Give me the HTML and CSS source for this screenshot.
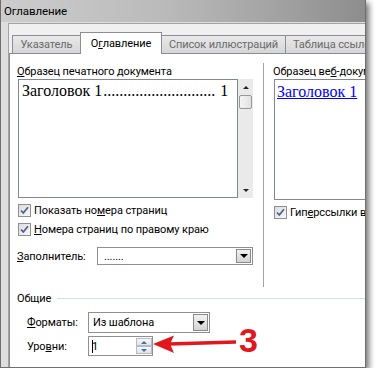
FILE: index.html
```html
<!DOCTYPE html>
<html lang="ru">

<head>
    <meta charset="UTF-8" />
    <meta name="viewport" content="width=device-width, initial-scale=1.0" />
    <title>Оглавление</title>
    <link rel="stylesheet" href="styles.css">
</head>

<body>

    <section class="window">
        <div class="titlebar">Оглавление</div>

        <div class="frame">
            <div class="client">

                <!-- вкладки -->
                <div class="tabs">
                    <div class="tab tab-index">Указатель</div>
                    <div class="tab act">О<u>г</u>лавление</div>
                    <div class="tab tab-figures">Список иллюстраций</div>
                    <div class="tab tab-cites">Таблица ссылок</div>
                </div>

                <div class="panel">
                    <div class="previews">

                        <div class="col-left">
                            <div class="label"><u>О</u>бразец печатного документа</div>
                            <div class="preview-wrap">
                                <div class="preview print">
                                    <div class="toc-line">
                                        <span>Заголовок 1</span>
                                        <span class="leader">............................</span>
                                        <span class="page-num">1</span>
                                    </div>
                                </div>
                                <div class="scrollbar">
                                    <span class="sb-arrow up"></span>
                                    <span class="sb-thumb"></span>
                                    <span class="sb-space"></span>
                                    <span class="sb-arrow down"></span>
                                </div>
                            </div>

                            <div class="check first">
                                <span class="box"><svg width="13" height="13" viewBox="0 0 13 13"><path d="M3 6.5 5.3 9 10 3.3" /></svg></span>
                                <span>Показать но<u>м</u>ера страниц</span>
                            </div>
                            <div class="check">
                                <span class="box"><svg width="13" height="13" viewBox="0 0 13 13"><path d="M3 6.5 5.3 9 10 3.3" /></svg></span>
                                <span><u>Н</u>омера страниц по правому краю</span>
                            </div>

                            <div class="field fill">
                                <span class="field-label"><u>З</u>аполнитель:</span>
                                <div class="combo combo-fill">
                                    <span class="combo-text">.......</span>
                                    <span class="combo-btn"></span>
                                </div>
                            </div>
                        </div>

                        <div class="sep"></div>

                        <div class="col-right">
                            <div class="label">Образец ве<u>б</u>-документа</div>
                            <div class="preview web">
                                <a class="web-link">Заголовок 1</a>
                            </div>
                            <div class="check web-check">
                                <span class="box"><svg width="13" height="13" viewBox="0 0 13 13"><path d="M3 6.5 5.3 9 10 3.3" /></svg></span>
                                <span>Гип<u>е</u>рссылки вместо номеров страниц</span>
                            </div>
                        </div>
                    </div>

                    <!-- Общие -->
                    <div class="group">
                        <div class="group-title">
                            <span>Общие</span>
                            <span class="group-line"></span>
                        </div>
                        <div class="field formats">
                            <span class="field-label short"><u>Ф</u>орматы:</span>
                            <div class="combo combo-formats">
                                <span class="combo-text">Из шаблона</span>
                                <span class="combo-btn"></span>
                            </div>
                        </div>
                        <div class="field levels">
                            <span class="field-label short">Уро<u>в</u>ни:</span>
                            <div class="spin">
                                <span class="spin-text"><i class="caret"></i>1</span>
                                <span class="spin-btns">
                                    <span class="spin-btn up"></span>
                                    <span class="spin-btn down"></span>
                                </span>
                            </div>
                        </div>
                    </div>
                </div>

            </div>
        </div>
    </section>

    <!-- пометка поверх скриншота -->
    <svg class="arrow" width="92" height="26" viewBox="0 0 92 26">
        <path d="M19 12 L86 10" stroke="#e3151d" stroke-width="3.5" fill="none" />
        <path d="M3 12 L24 3.5 L20 12 L24 21 Z" fill="#e3151d" />
    </svg>
    <div class="callout">3</div>

</body>

</html>
```

FILE: styles.css
```css
body {
    margin: 0;
    padding: 0;
    background-color: #fff;
    font-family: Roboto, "Liberation Sans", sans-serif;
    font-size: 11px;
    letter-spacing: -0.1px;
    color: #000;
}

u {
    text-decoration: underline;
    text-underline-offset: 1px;
}

.window {
    position: relative;
    display: flex;
    flex-direction: column;
    width: 366px;
    height: 368px;
    box-sizing: border-box;
    border-left: 1px solid #6f6f6f;
    border-right: 1px solid #6f6f6f;
    border-bottom: 1px solid #6f6f6f;
    overflow: hidden;
    box-shadow: 3px 3px 6px rgba(0, 0, 0, 0.55);
}

.titlebar {
    height: 22px;
    flex: none;
    padding-left: 3px;
    line-height: 22px;
    font-size: 11.5px;
    background: linear-gradient(to right, #cdcdcd, #bababa 45%, #a3a3a3 75%, #8d8d8d);
}

.frame {
    flex: 1;
    display: flex;
    padding: 1px 0 0 7px;
    background-color: #dedede;
}

.client {
    flex: 1;
    display: flex;
    flex-direction: column;
    border-top: 1px solid #a3a3a3;
    border-left: 1px solid #a3a3a3;
    background-color: #f0f0f0;
}

/* вкладки */
.tabs {
    display: flex;
    align-items: flex-end;
    height: 29px;
    padding-left: 3px;
    flex: none;
}

.tab {
    display: flex;
    align-items: center;
    justify-content: center;
    height: 18px;
    box-sizing: border-box;
    border: 1px solid #8c8e94;
    border-bottom: none;
    background: linear-gradient(#e9e9e9, #d6d6d6);
    color: #6a6a6a;
    white-space: nowrap;
    flex: none;
}

.tab-index {
    width: 68px;
    border-right: none;
}

.tab-figures {
    width: 124px;
    border-left: none;
}

.tab-cites {
    width: 100px;
    border-left: none;
    justify-content: flex-start;
    padding-left: 7px;
}

.act {
    position: relative;
    z-index: 1;
    width: 82px;
    height: 22px;
    margin-bottom: -1px;
    padding-bottom: 1px;
    background: #fff;
    color: #000;
}

.panel {
    flex: 1;
    border-top: 1px solid #898c95;
    border-left: 1px solid #898c95;
    background-color: #fff;
    padding: 10px 0 0 7px;
    overflow: hidden;
}

.previews {
    display: flex;
    height: 223px;
}

.col-left {
    width: 236px;
    flex: none;
}

.label {
    height: 15px;
    line-height: 15px;
    white-space: nowrap;
}

.preview-wrap {
    display: flex;
    height: 119px;
    margin-left: 1px;
}

.preview {
    box-sizing: border-box;
    border: 1px solid #828790;
    background-color: #fff;
    font-family: "Liberation Serif", serif;
    font-size: 16px;
    line-height: 18px;
    letter-spacing: 0;
}

.print {
    width: 220px;
    padding: 2px 0 0 3px;
}

.toc-line {
    display: flex;
    white-space: nowrap;
}

.leader {
    margin-left: 1px;
}

.page-num {
    margin-left: 5px;
}

.scrollbar {
    display: flex;
    flex-direction: column;
    align-items: center;
    width: 15px;
    background-color: #eaeaea;
}

.sb-arrow {
    width: 0;
    height: 0;
    border-left: 3px solid transparent;
    border-right: 3px solid transparent;
}

.sb-arrow.up {
    margin-top: 7px;
    border-bottom: 3px solid #222;
}

.sb-arrow.down {
    margin-bottom: 6px;
    border-top: 3px solid #222;
}

.sb-thumb {
    width: 13px;
    height: 14px;
    margin-top: 6px;
    box-sizing: border-box;
    border: 1px solid #979797;
    border-radius: 2px;
    background: linear-gradient(to right, #f4f4f4, #e2e2e2);
}

.sb-space {
    flex: 1;
}

/* флажки */
.check {
    display: flex;
    align-items: center;
    height: 19px;
    white-space: nowrap;
}

.check.first {
    margin-top: 3px;
}

.box {
    display: block;
    width: 13px;
    height: 13px;
    margin-left: 1px;
    margin-right: 3px;
    box-sizing: border-box;
    border: 1px solid #8e8f8f;
    background: linear-gradient(135deg, #dcdcdc, #f8f8f8);
    flex: none;
}

.box svg {
    display: block;
    margin: -1px 0 0 -1px;
}

.box path {
    fill: none;
    stroke: #4b5f8c;
    stroke-width: 1.7;
}

/* поля */
.field {
    display: flex;
    align-items: center;
    white-space: nowrap;
}

.fill {
    margin-top: 8px;
}

.field-label {
    width: 80px;
    flex: none;
}

.field-label.short {
    width: 61px;
}

.combo {
    display: flex;
    align-items: center;
    box-sizing: border-box;
    border: 1px solid #8f8f8f;
    background-color: #fff;
}

.combo-fill {
    width: 156px;
    height: 18px;
}

.combo-formats {
    width: 122px;
    height: 21px;
}

.combo-text {
    flex: 1;
    padding-left: 4px;
}

.combo-fill .combo-text {
    padding-left: 6px;
}

.combo-btn {
    position: relative;
    width: 15px;
    height: calc(100% - 2px);
    margin-right: 1px;
    box-sizing: border-box;
    border: 1px solid #8a8a8a;
    background: linear-gradient(#f2f2f2, #d4d4d4);
}

.combo-btn::after {
    content: "";
    position: absolute;
    left: 3px;
    top: 50%;
    margin-top: -2px;
    border-left: 4px solid transparent;
    border-right: 4px solid transparent;
    border-top: 4px solid #000;
}

.col-right .preview {
    width: 130px;
}

.sep {
    width: 1px;
    height: 224px;
    margin: -1px 0 0 10px;
    background-color: #a3a3a3;
    flex: none;
}

.col-right {
    margin-left: 9px;
    width: 160px;
    flex: none;
}

.web {
    height: 121px;
    margin-left: 1px;
    padding: 3px 0 0 2px;
}

.web-link {
    color: #0000ff;
    text-decoration: underline;
}

.web-check {
    margin-top: 3px;
}

/* Общие */
.group {
    margin-top: 3px;
}

.group-title {
    display: flex;
    align-items: center;
    height: 16px;
}

.group-line {
    flex: 1;
    height: 1px;
    margin-left: 6px;
    background-color: #d5dfe5;
}

.formats {
    margin: 6px 0 0 10px;
    height: 21px;
}

.levels {
    margin: 3px 0 0 10px;
    height: 20px;
}

.spin {
    display: flex;
    width: 65px;
    height: 20px;
    box-sizing: border-box;
    border: 1px solid #8f8f8f;
}

.spin-text {
    flex: 1;
    display: flex;
    align-items: center;
    padding-left: 3px;
}

.caret {
    display: block;
    width: 1px;
    height: 13px;
    margin-right: -1px;
    background-color: #000;
}

.spin-btns {
    display: flex;
    flex-direction: column;
    width: 16px;
    padding: 1px 0;
}

.spin-btn {
    position: relative;
    flex: 1;
    box-sizing: border-box;
    border: 1px solid #b7bcc3;
    background: linear-gradient(#f5f7fa, #dfe4ea);
}

.spin-btn::after {
    content: "";
    position: absolute;
    left: 4px;
    top: 2px;
    border-left: 3px solid transparent;
    border-right: 3px solid transparent;
}

.spin-btn.up::after {
    border-bottom: 3px solid #4c6ea6;
}

.spin-btn.down::after {
    border-top: 3px solid #4c6ea6;
}

/* красная стрелка */
.arrow {
    position: absolute;
    left: 150px;
    top: 332px;
}

.callout {
    position: absolute;
    left: 239px;
    top: 323px;
    font-family: "Liberation Sans", sans-serif;
    font-weight: bold;
    font-size: 34px;
    line-height: 34px;
    color: #e3151d;
}
```
